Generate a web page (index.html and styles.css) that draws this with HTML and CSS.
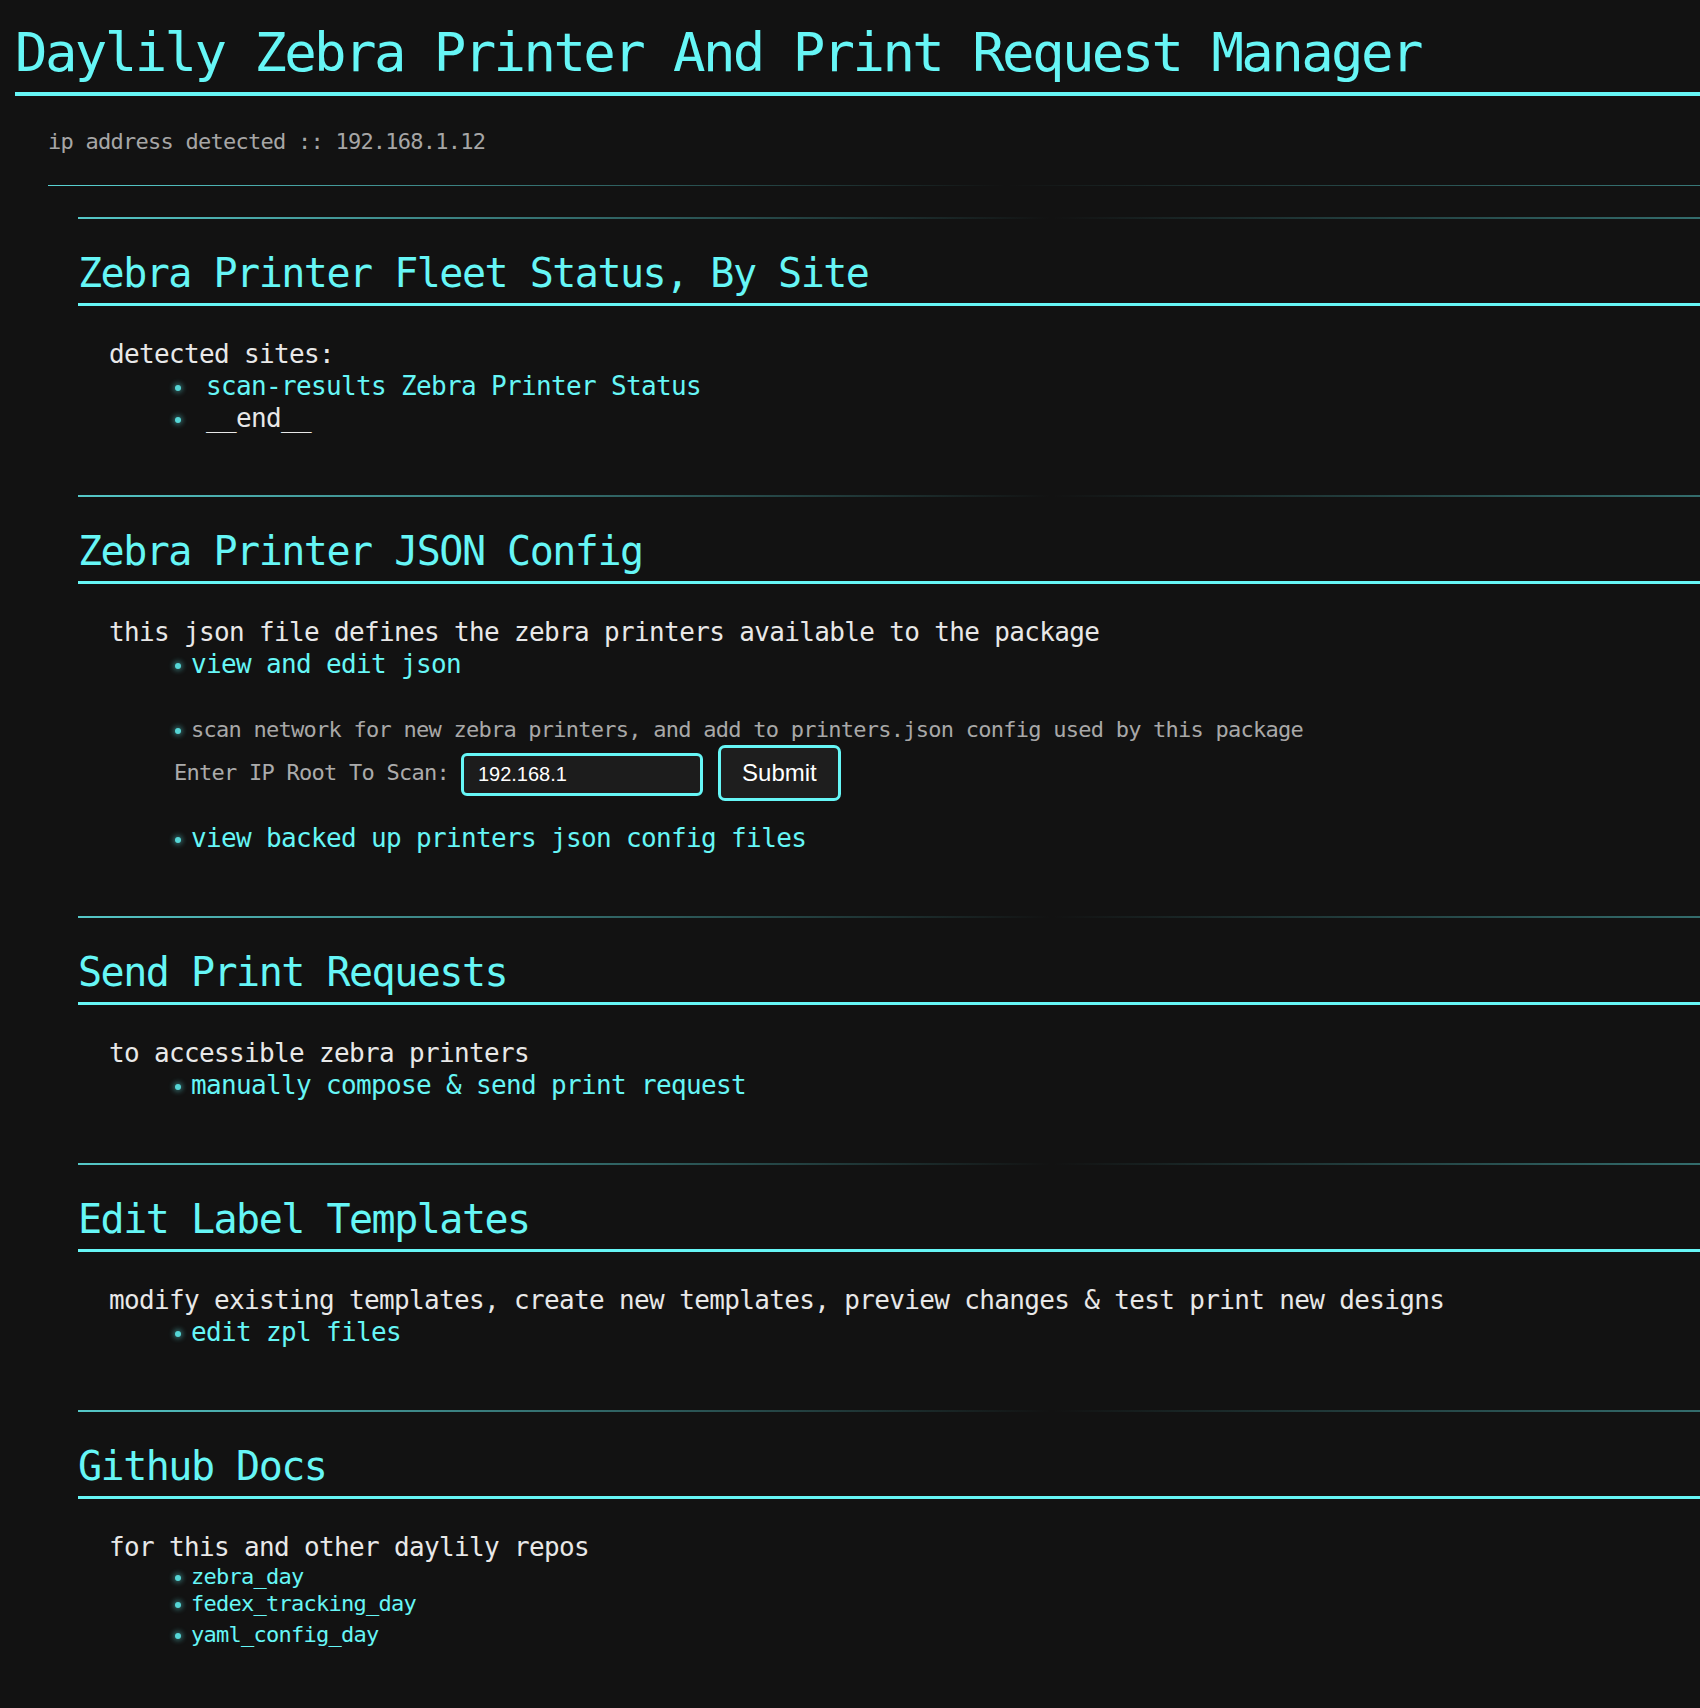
FILE: index.html
```html
<!DOCTYPE html>
<html lang="en">
<head>
<meta charset="utf-8">
<title>Daylily Zebra Printer And Print Request Manager</title>
<link rel="stylesheet" href="styles.css">
</head>
<body>
<h1 class="title">Daylily Zebra Printer And Print Request Manager</h1>
<div class="main">
  <p class="ip">ip address detected :: 192.168.1.12</p>
  <hr class="rule-top">

  <section class="panel first">
    <hr class="rule">
    <h2 class="heading">Zebra Printer Fleet Status, By Site</h2>
    <p class="lead">detected sites:</p>
    <ul class="links spaced">
      <li><a class="link" href="#">scan-results Zebra Printer Status</a></li>
      <li><span class="plain">__end__</span></li>
    </ul>
  </section>

  <section class="panel">
    <hr class="rule">
    <h2 class="heading">Zebra Printer JSON Config</h2>
    <p class="lead">this json file defines the zebra printers available to the package</p>
    <ul class="links">
      <li><a class="link" href="#">view and edit json</a></li>
    </ul>
    <ul class="links small scan">
      <li><span class="muted">scan network for new zebra printers, and add to printers.json config used by this package</span></li>
    </ul>
    <form class="scan-form">
      <label class="scan-label" for="iproot">Enter IP Root To Scan:</label>
      <input class="scan-input" id="iproot" type="text" value="192.168.1">
      <button class="scan-btn" type="button">Submit</button>
    </form>
    <ul class="links after-form">
      <li><a class="link" href="#">view backed up printers json config files</a></li>
    </ul>
  </section>

  <section class="panel">
    <hr class="rule">
    <h2 class="heading">Send Print Requests</h2>
    <p class="lead">to accessible zebra printers</p>
    <ul class="links">
      <li><a class="link" href="#">manually compose &amp; send print request</a></li>
    </ul>
  </section>

  <section class="panel">
    <hr class="rule">
    <h2 class="heading">Edit Label Templates</h2>
    <p class="lead">modify existing templates, create new templates, preview changes &amp; test print new designs</p>
    <ul class="links">
      <li><a class="link" href="#">edit zpl files</a></li>
    </ul>
  </section>

  <section class="panel">
    <hr class="rule">
    <h2 class="heading">Github Docs</h2>
    <p class="lead">for this and other daylily repos</p>
    <ul class="links small repos">
      <li><a class="link" href="#">zebra_day</a></li>
      <li><a class="link" href="#">fedex_tracking_day</a></li>
      <li class="gap"><a class="link" href="#">yaml_config_day</a></li>
    </ul>
  </section>
</div>
</body>
</html>
```

FILE: styles.css
```css
* {
  box-sizing: border-box;
}

html,
body {
  margin: 0;
  padding: 0;
  background: #121212;
}

body {
  font-family: "DejaVu Sans Mono", "Liberation Mono", monospace;
  color: #e8e8e8;
  min-height: 1708px;
}

.title {
  margin: 23px 0 0 15px;
  padding-bottom: 9px;
  font-size: 54px;
  line-height: 60px;
  letter-spacing: -2.6px;
  font-weight: normal;
  color: #66f6f6;
  border-bottom: 4px solid #66f6f6;
  white-space: nowrap;
}

.main {
  padding-left: 48px;
}

.ip {
  margin: 31px 0 0;
  font-size: 22px;
  line-height: 30px;
  letter-spacing: -0.75px;
  color: #a6a6a6;
}

.rule-top {
  margin: 28px 0 0;
  height: 1px;
  border: 0;
  background: linear-gradient(to right, rgba(102, 246, 246, 0.85), rgba(102, 246, 246, 0) 58%, rgba(102, 246, 246, 0.45));
}

.panel {
  margin-left: 30px;
  padding-bottom: 62px;
}

.panel.first {
  margin-top: 31px;
  padding-bottom: 61px;
}

.rule {
  margin: 0;
  height: 2px;
  border: 0;
  background: linear-gradient(to right, rgba(102, 246, 246, 0.8), rgba(102, 246, 246, 0) 60%, rgba(102, 246, 246, 0.4));
}

.heading {
  margin: 29px 0 0;
  padding-bottom: 5px;
  font-size: 40px;
  line-height: 50px;
  letter-spacing: -1.5px;
  font-weight: normal;
  color: #66f6f6;
  border-bottom: 3px solid #66f6f6;
  white-space: nowrap;
}

.lead {
  margin: 32px 0 0 31px;
  font-size: 26px;
  line-height: 32px;
  letter-spacing: -0.65px;
  color: #e8e8e8;
  white-space: nowrap;
}

.links {
  list-style: none;
  margin: 0;
  padding-left: 97px;
  font-size: 26px;
  line-height: 32px;
  letter-spacing: -0.65px;
  white-space: nowrap;
}

.links li::before {
  content: "";
  display: inline-block;
  width: 6px;
  height: 6px;
  margin-right: 10px;
  border-radius: 50%;
  background: #55d6d6;
  box-shadow: 0 0 5px 2px rgba(102, 246, 246, 0.35);
  vertical-align: middle;
}

.links.spaced li::before {
  margin-right: 25px;
}

.links.small {
  font-size: 22px;
  line-height: 27px;
  letter-spacing: -0.75px;
}

.links.scan {
  margin-top: 35px;
  line-height: 30px;
}

.links .gap {
  margin-top: 4px;
}

.link {
  color: #66f6f6;
  text-decoration: none;
}

.plain {
  color: #e8e8e8;
}

.muted {
  color: #a8a8a8;
}

.scan-form {
  display: flex;
  align-items: center;
  margin: 0 0 0 96px;
  height: 56px;
}

.scan-label {
  margin-right: 12px;
  font-size: 22px;
  line-height: 30px;
  letter-spacing: -0.75px;
  color: #ababab;
  white-space: nowrap;
}

.scan-input {
  width: 242px;
  height: 43px;
  margin: 2px 15px 0 0;
  padding: 0 14px;
  border: 3px solid #66f6f6;
  border-radius: 6px;
  background: #1c1c1c;
  color: #ffffff;
  font-family: "Liberation Sans", Arial, sans-serif;
  font-size: 20px;
  outline: none;
}

.scan-btn {
  width: 123px;
  height: 56px;
  margin: 0;
  padding: 0;
  border: 3px solid #66f6f6;
  border-radius: 7px;
  background: #1e1e1e;
  color: #ffffff;
  font-family: "Liberation Sans", Arial, sans-serif;
  font-size: 24px;
}

.links.after-form {
  margin-top: 21px;
}
```
